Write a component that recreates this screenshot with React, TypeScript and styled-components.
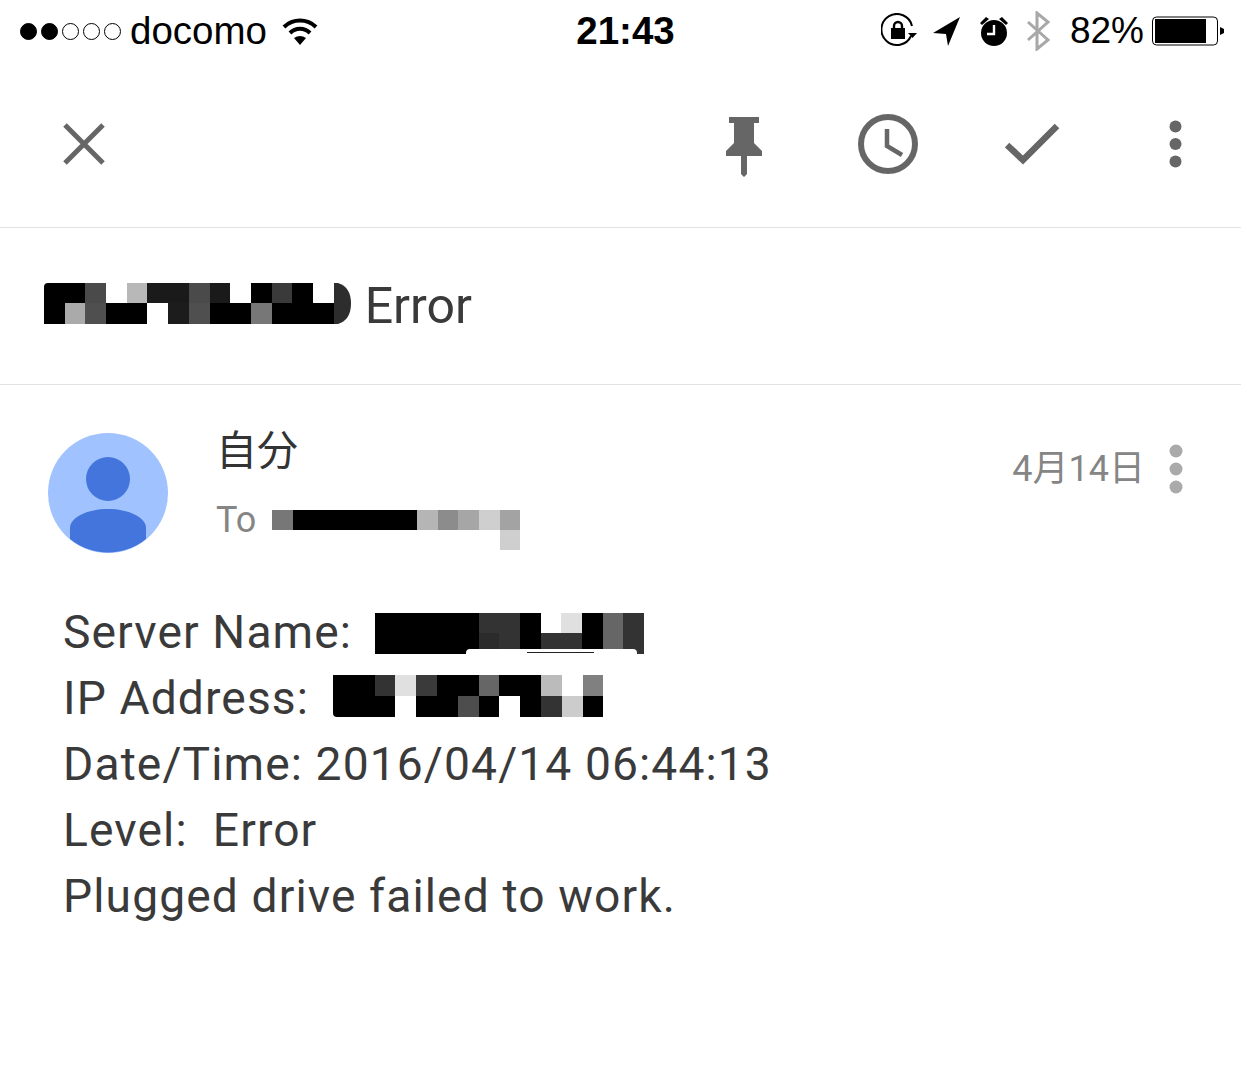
import * as React from 'react'
import styled, {createGlobalStyle} from 'styled-components'

const GlobalStyle = createGlobalStyle`
  html, body {
    margin: 0;
    padding: 0;
    background: #fff;
  }
`

const Page = styled.div`
  width: 1241px;
  height: 1069px;
  overflow: hidden;
  background: #fff;
  font-family: Roboto, "Noto Sans CJK JP", sans-serif;
`

const StatusBar = styled.header`
  height: 60px;
  display: grid;
  grid-template-columns: 1fr auto 1fr;
  align-items: center;
  color: #000;
  font-family: "Liberation Sans", sans-serif;
`

const StatusLeft = styled.div`
  display: flex;
  align-items: center;
  padding-left: 20px;
`

const Signal = styled.span<{$on?: boolean}>`
  width: 17px;
  height: 17px;
  margin-right: 4px;
  border-radius: 50%;
  box-sizing: border-box;
  border: 1px solid #000;
  background: ${(p) => (p.$on ? '#000' : '#fff')};
`

const Carrier = styled.span`
  margin-left: 5px;
  margin-right: 15px;
  font-size: 38.5px;
  line-height: 62px;
  font-weight: 400;
`

const Clock = styled.div`
  font-size: 38.5px;
  font-weight: 700;
  line-height: 62px;
  margin-left: 10px;
`

const StatusRight = styled.div`
  display: flex;
  align-items: center;
  justify-content: flex-end;
  padding-right: 17px;
`

const Percent = styled.span`
  font-size: 37px;
  line-height: 62px;
  margin: 0 8px 0 20px;
`

const Toolbar = styled.nav`
  height: 167px;
  display: flex;
  align-items: center;
  padding-left: 62px;
  border-bottom: 1px solid #e2e2e2;
`

const ActionIcons = styled.div`
  display: flex;
  align-items: center;
  margin-left: auto;
  margin-right: 59px;
`

const Subject = styled.div`
  height: 156px;
  display: flex;
  align-items: center;
  padding-left: 44px;
  border-bottom: 1px solid #e2e2e2;
`

const SubjectMark = styled.div`
  display: flex;
  margin-bottom: 6px;
`

const SubjectText = styled.h1`
  margin: 0 0 0 14px;
  font-size: 50px;
  font-weight: 400;
  color: #3a3a3a;
`

const Mosaic = styled.div<{$cols: number; $cell: number; $row: number; $corner?: string}>`
  position: relative;
  overflow: hidden;
  display: grid;
  grid-template-columns: repeat(${(p) => p.$cols}, ${(p) => p.$cell}px);
  grid-auto-rows: ${(p) => p.$row}px;
  border-radius: ${(p) => p.$corner || '0'};
`

const Cell = styled.i<{$color: string}>`
  display: block;
  background: ${(p) => p.$color};
`

const SenderRow = styled.div`
  display: flex;
  align-items: flex-start;
  padding: 48px 58px 0 48px;
`

const Avatar = styled.svg`
  flex: none;
  width: 120px;
  height: 120px;
`

const SenderInfo = styled.div`
  margin-left: 48px;
  margin-top: -7px;
  flex: 1;
`

const SenderName = styled.div`
  font-size: 41px;
  line-height: 50px;
  color: #333;
`

const RecipientRow = styled.div`
  display: flex;
  align-items: flex-start;
  margin-top: 24px;
  color: #858585;
  font-size: 36px;
  line-height: 40px;
`

const RecipientMosaic = styled.div`
  margin-left: 16px;
  margin-top: 10px;
`

const DateGroup = styled.div`
  display: flex;
  align-items: flex-start;
  padding-top: 11px;
`

const DateText = styled.span`
  font-size: 36px;
  line-height: 46px;
  color: #858585;
  margin: 2px 24px 0 0;
`

const Body = styled.div`
  padding: 46px 0 0 63px;
  font-size: 46.2px;
  line-height: 66px;
  letter-spacing: 1.1px;
  color: #3a3a3a;
`

const BodyLine = styled.div`
  display: flex;
  align-items: center;
  height: 66px;
  white-space: pre;
`

const InlineMosaic = styled.div<{$left: number; $top: number}>`
  margin-left: ${(p) => p.$left}px;
  margin-top: ${(p) => p.$top}px;
`

const Notch = styled.span`
  position: absolute;
  left: 91px;
  right: 7px;
  bottom: 0;
  height: 5px;
  background: #fff;
  border-radius: 4px 4px 0 0;

  &::after {
    content: '';
    position: absolute;
    left: 61px;
    width: 67px;
    bottom: 1px;
    height: 1px;
    background: #222;
  }
`

const w = '#fff'
const k = '#000'

const subjectCells = [
  k, k, '#4a4a4a', w, '#b8b8b8', '#1a1a1a', '#1a1a1a', '#4a4a4a', '#1a1a1a', w, k, '#3a3a3a', k, w,
  k, '#aaa', '#4f4f4f', k, k, w, '#1c1c1c', '#4f4f4f', k, k, '#777', k, k, k,
]
const recipientCells = [
  '#777', k, k, k, k, k, k, '#b5b5b5', '#8c8c8c', '#a6a6a6', '#cfcfcf', '#a3a3a3',
  w, w, w, w, w, w, w, w, w, w, w, '#cfcfcf',
]
const serverCells = [
  k, k, k, k, k, '#333', '#333', k, w, '#e0e0e0', k, '#666', '#333',
  k, k, k, k, k, '#2b2b2b', '#333', k, '#333', '#333', k, '#666', '#333',
]
const ipCells = [
  k, k, '#333', '#e0e0e0', '#3a3a3a', k, k, '#666', k, k, '#bbb', w, '#808080',
  k, k, k, w, k, k, '#4d4d4d', k, w, k, '#333', '#ccc', k,
]

type TPixels = {
  cells: string[]
  cols: number
  cell: number
  row: number
  corner?: string
  children?: React.ReactNode
}

const Pixels: React.FC<TPixels> = (props) => (
  <Mosaic $cols={props.cols} $cell={props.cell} $row={props.row} $corner={props.corner}>
    {props.cells.map((c, i) => <Cell key={i} $color={c} />)}
    {props.children}
  </Mosaic>
)

const SubjectEnd = styled.svg`
  display: block;
`

const ToolIcon = styled.svg<{$gap?: number; $top?: number}>`
  display: block;
  flex: none;
  margin-left: ${(p) => p.$gap || 0}px;
  margin-top: ${(p) => p.$top || 0}px;
`

const StatusIcon = styled.svg<{$gap?: number}>`
  display: block;
  flex: none;
  margin-left: ${(p) => p.$gap || 0}px;
`

const App: React.FC = () => {
  return (
    <Page>
      <GlobalStyle />
      <StatusBar>
        <StatusLeft>
          <Signal $on />
          <Signal $on />
          <Signal />
          <Signal />
          <Signal />
          <Carrier>docomo</Carrier>
          <StatusIcon width="36" height="28" viewBox="0 0 36 28">
            <path d="M2 10 A23 23 0 0 1 34 10" fill="none" stroke="#000" strokeWidth="4" />
            <path d="M8 16 A14 14 0 0 1 28 16" fill="none" stroke="#000" strokeWidth="4" />
            <path d="M12 21 Q18 17 24 21 L18 28 Z" fill="#000" />
          </StatusIcon>
        </StatusLeft>
        <Clock>21:43</Clock>
        <StatusRight>
          <StatusIcon width="36" height="36" viewBox="0 0 36 36">
            <path d="M30 23 A15.5 15.5 0 1 1 31 13" fill="none" stroke="#000" strokeWidth="2" />
            <path d="M27 20 h9 l-4.5 5 z" fill="#000" />
            <rect x="10" y="15" width="14" height="11" fill="#000" />
            <path d="M13 16 v-3 a4 4 0 0 1 8 0 v3" fill="none" stroke="#000" strokeWidth="2.4" />
          </StatusIcon>
          <StatusIcon $gap={16} width="28" height="30" viewBox="0 0 28 30">
            <path d="M27 1 L0 17 L13 18 L15 30 Z" fill="#000" />
          </StatusIcon>
          <StatusIcon $gap={18} width="30" height="32" viewBox="0 0 30 32">
            <circle cx="15" cy="18" r="13" fill="#000" />
            <path d="M15 10 V19 H8" fill="none" stroke="#fff" strokeWidth="2.4" />
            <path d="M1 8 L7 2 L10 4 L3 10 Z M29 8 L23 2 L20 4 L27 10 Z" fill="#000" />
          </StatusIcon>
          <StatusIcon $gap={17} width="24" height="40" viewBox="0 0 24 40">
            <path d="M2 11 L22 29 L11 38 V2 L22 11 L2 29" fill="none" stroke="#a8a8a8" strokeWidth="3" />
          </StatusIcon>
          <Percent>82%</Percent>
          <StatusIcon width="72" height="30" viewBox="0 0 72 30">
            <rect x="0.5" y="1" width="65" height="28" rx="4" fill="#fff" stroke="#000" />
            <rect x="3" y="3" width="51" height="24" fill="#000" />
            <path d="M68 11 L72 13 V17 L68 19 Z" fill="#000" />
          </StatusIcon>
        </StatusRight>
      </StatusBar>

      <Toolbar>
        <ToolIcon width="44" height="44" viewBox="0 0 44 44">
          <path d="M3 3 L41 41 M41 3 L3 41" stroke="#666" strokeWidth="5" fill="none" />
        </ToolIcon>
        <ActionIcons>
          <ToolIcon $top={6} width="36" height="60" viewBox="0 0 36 60">
            <path d="M3 0 H33 V6 H28 V26 L36 34 V39 H21 V57 L18 60 L15 57 V39 H0 V34 L8 26 V6 H3 Z" fill="#666" />
          </ToolIcon>
          <ToolIcon $gap={96} width="60" height="60" viewBox="0 0 60 60">
            <circle cx="30" cy="30" r="27" fill="none" stroke="#666" strokeWidth="6" />
            <path d="M29 15 V32 L44 41" fill="none" stroke="#666" strokeWidth="4.5" />
          </ToolIcon>
          <ToolIcon $gap={87} width="55" height="42" viewBox="0 0 55 42">
            <path d="M2 22 L18 37 L52 3" fill="none" stroke="#666" strokeWidth="6.5" />
          </ToolIcon>
          <ToolIcon $gap={109} width="13" height="48" viewBox="0 0 13 48">
            <circle cx="6.5" cy="6.5" r="6" fill="#666" />
            <circle cx="6.5" cy="24" r="6" fill="#666" />
            <circle cx="6.5" cy="41.5" r="6" fill="#666" />
          </ToolIcon>
        </ActionIcons>
      </Toolbar>

      <Subject>
        <SubjectMark>
          <Pixels cells={subjectCells} cols={14} cell={20.7} row={20.5} corner="4px 0 0 0" />
          <SubjectEnd width="17" height="41" viewBox="0 0 17 41">
            <path d="M0 0 H4 Q17 4 17 20.5 Q17 37 4 41 H0 Z" fill="#2d2d2d" />
          </SubjectEnd>
        </SubjectMark>
        <SubjectText>Error</SubjectText>
      </Subject>

      <SenderRow>
        <Avatar viewBox="0 0 120 120">
          <circle cx="60" cy="60" r="60" fill="#a0c3ff" />
          <circle cx="60" cy="46" r="22" fill="#4375dc" />
          <path d="M22 106 V95 C22 84 40 76 60 76 C80 76 98 84 98 95 V106 A60 60 0 0 1 22 106 Z" fill="#4375dc" />
        </Avatar>
        <SenderInfo>
          <SenderName>自分</SenderName>
          <RecipientRow>
            To
            <RecipientMosaic>
              <Pixels cells={recipientCells} cols={12} cell={20.67} row={20} />
            </RecipientMosaic>
          </RecipientRow>
        </SenderInfo>
        <DateGroup>
          <DateText>4月14日</DateText>
          <ToolIcon width="14" height="50" viewBox="0 0 14 50">
            <circle cx="7" cy="7" r="6.5" fill="#aaa" />
            <circle cx="7" cy="25" r="6.5" fill="#aaa" />
            <circle cx="7" cy="43" r="6.5" fill="#aaa" />
          </ToolIcon>
        </DateGroup>
      </SenderRow>

      <Body>
        <BodyLine>
          Server Name:
          <InlineMosaic $left={23} $top={2}>
            <Pixels cells={serverCells} cols={13} cell={20.7} row={20.5}>
              <Notch />
            </Pixels>
          </InlineMosaic>
        </BodyLine>
        <BodyLine>
          IP Address:
          <InlineMosaic $left={24} $top={-4}>
            <Pixels cells={ipCells} cols={13} cell={20.8} row={20.7} corner="0 0 0 4px" />
          </InlineMosaic>
        </BodyLine>
        <BodyLine>Date/Time: 2016/04/14 06:44:13</BodyLine>
        <BodyLine>Level:  Error</BodyLine>
        <BodyLine>Plugged drive failed to work.</BodyLine>
      </Body>
    </Page>
  )
}

export default App
